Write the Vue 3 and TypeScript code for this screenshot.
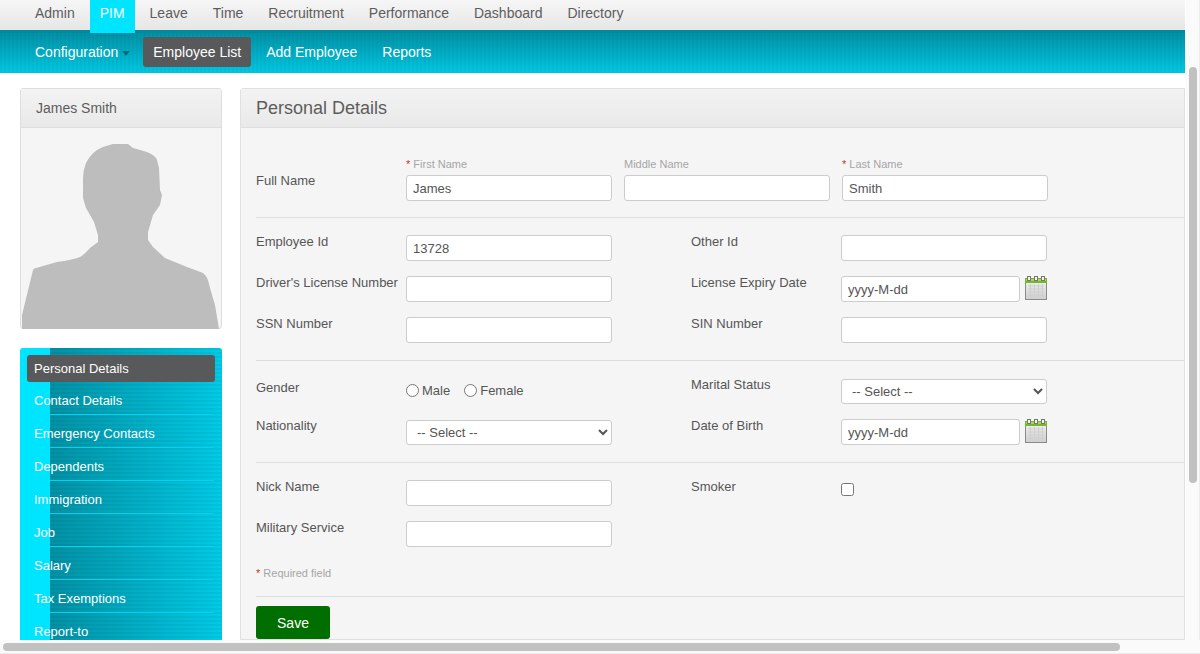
<script setup lang="ts">
const topMenu = ['Admin', 'PIM', 'Leave', 'Time', 'Recruitment', 'Performance', 'Dashboard', 'Directory']
const subMenu = ['Configuration', 'Employee List', 'Add Employee', 'Reports']
const sideMenu = [
  'Personal Details',
  'Contact Details',
  'Emergency Contacts',
  'Dependents',
  'Immigration',
  'Job',
  'Salary',
  'Tax Exemptions',
  'Report-to',
]
</script>

<template>
  <div class="page">
    <nav class="top-nav">
      <a v-for="item in topMenu" :key="item" class="top-item" :class="{ active: item === 'PIM' }">{{ item }}</a>
    </nav>
    <nav class="sub-nav">
      <a
        v-for="item in subMenu"
        :key="item"
        class="sub-item"
        :class="{ active: item === 'Employee List', config: item === 'Configuration' }"
        >{{ item }}<i v-if="item === 'Configuration'" class="caret"></i
      ></a>
    </nav>

    <div class="content">
      <aside class="sidebar">
        <section class="photo-card">
          <h2 class="photo-title">James Smith</h2>
          <div class="photo-body">
            <svg class="silhouette" viewBox="22 144 198 185" aria-hidden="true">
              <path
                fill="#bdbdbd"
                d="M22 329 L22 315 L33 270 Q34 268 36 268 L57 262 Q72 260 80 257 Q85 254 90 248 L98 242 L98 235 L94 222 L86 208 L83 198 L83 178 Q83 170 86 163 Q90 155 97 150 Q104 146 113 144 L128 144 L133 148 L147 152 Q155 155 157 160 L159 168 L160 190 L162 195 L160 205 L153 215 L148 232 L148 240 L153 247 L165 258 L187 267 L203 273 Q207 276 208 280 L210 288 L215 305 L219 329 Z"
              />
            </svg>
          </div>
        </section>

        <ul class="side-menu">
          <li v-for="(item, i) in sideMenu" :key="item" class="side-item" :class="{ active: i === 0 }">
            {{ item }}
          </li>
        </ul>
      </aside>

      <main class="details">
        <h1 class="details-title">Personal Details</h1>
        <form class="details-form" @submit.prevent>
          <div class="name-row">
            <label class="row-label name-label">Full Name</label>
            <div class="name-field">
              <span class="hint"><b>*</b> First Name</span>
              <input class="input name-input" value="James" />
            </div>
            <div class="name-field">
              <span class="hint">Middle Name</span>
              <input class="input name-input" />
            </div>
            <div class="name-field">
              <span class="hint"><b>*</b> Last Name</span>
              <input class="input name-input" value="Smith" />
            </div>
          </div>

          <hr class="divider first" />

          <div class="grid ids">
            <label class="row-label">Employee Id</label>
            <input class="input" value="13728" />
            <label class="row-label">Other Id</label>
            <input class="input" />

            <label class="row-label">Driver's License Number</label>
            <input class="input" />
            <label class="row-label">License Expiry Date</label>
            <div class="date-field">
              <input class="input date-input" value="yyyy-M-dd" />
              <svg class="cal" viewBox="0 0 22 24" aria-hidden="true">
                <defs>
                  <linearGradient id="cal-body" x1="0" y1="0" x2="0" y2="1">
                    <stop offset="0" stop-color="#f2f2f2" />
                    <stop offset="1" stop-color="#cfcfcf" />
                  </linearGradient>
                </defs>
                <rect x="0.5" y="2.5" width="21" height="21" fill="url(#cal-body)" stroke="#8b8b86" />
                <rect x="0" y="2" width="22" height="5" fill="#77b82a" />
                <rect x="1" y="3" width="20" height="2" fill="#a5d65a" />
                <path d="M3 10h16M3 13h16M3 16h16M3 19h16M5.5 8v14M9.5 8v14M13.5 8v14M17.5 8v14" stroke="#cfcfcf" />
                <rect x="2.5" y="0.5" width="3" height="4" fill="#f2f2f2" stroke="#77776f" />
                <rect x="9.5" y="0.5" width="3" height="4" fill="#f2f2f2" stroke="#77776f" />
                <rect x="16.5" y="0.5" width="3" height="4" fill="#f2f2f2" stroke="#77776f" />
              </svg>
            </div>

            <label class="row-label">SSN Number</label>
            <input class="input" />
            <label class="row-label">SIN Number</label>
            <input class="input" />
          </div>

          <hr class="divider second" />

          <div class="grid personal">
            <label class="row-label gender-label">Gender</label>
            <div class="radios">
              <label class="radio"><input type="radio" name="gender" />Male</label>
              <label class="radio"><input type="radio" name="gender" />Female</label>
            </div>
            <label class="row-label status-label">Marital Status</label>
            <select class="input select"><option>-- Select --</option></select>

            <label class="row-label lift">Nationality</label>
            <select class="input select"><option>-- Select --</option></select>
            <label class="row-label lift">Date of Birth</label>
            <div class="date-field lift-date">
              <input class="input date-input" value="yyyy-M-dd" />
              <svg class="cal" viewBox="0 0 22 24" aria-hidden="true">
                <rect x="0.5" y="2.5" width="21" height="21" fill="url(#cal-body)" stroke="#8b8b86" />
                <rect x="0" y="2" width="22" height="5" fill="#77b82a" />
                <rect x="1" y="3" width="20" height="2" fill="#a5d65a" />
                <path d="M3 10h16M3 13h16M3 16h16M3 19h16M5.5 8v14M9.5 8v14M13.5 8v14M17.5 8v14" stroke="#cfcfcf" />
                <rect x="2.5" y="0.5" width="3" height="4" fill="#f2f2f2" stroke="#77776f" />
                <rect x="9.5" y="0.5" width="3" height="4" fill="#f2f2f2" stroke="#77776f" />
                <rect x="16.5" y="0.5" width="3" height="4" fill="#f2f2f2" stroke="#77776f" />
              </svg>
            </div>
          </div>

          <hr class="divider third" />

          <div class="grid extra">
            <label class="row-label">Nick Name</label>
            <input class="input" />
            <label class="row-label">Smoker</label>
            <div><input class="check" type="checkbox" /></div>

            <label class="row-label">Military Service</label>
            <input class="input" />
          </div>

          <p class="required"><b>*</b> Required field</p>
          <hr class="divider fourth" />
          <button class="save" type="button">Save</button>
        </form>
      </main>
    </div>

    <!-- scrollbars drawn over the page, window is fixed size -->
    <div class="scroll-v"><div class="thumb-v"></div></div>
    <div class="scroll-h"><div class="thumb-h"></div></div>
  </div>
</template>

<style scoped>
.page {
  position: relative;
  width: 1200px;
  height: 654px;
  overflow: hidden;
  background: #fff;
  color: #555;
  font-family: 'Liberation Sans', Arial, sans-serif;
  font-size: 13px;
}

.top-nav {
  display: flex;
  width: 1185px;
  height: 30px;
  padding-left: 25px;
  box-sizing: border-box;
  background: linear-gradient(#f6f6f6, #e6e6e6);
}
.top-item {
  height: 33px;
  padding: 5px 10px 0;
  margin-right: 5px;
  box-sizing: border-box;
  font-size: 14px;
  line-height: 17px;
  color: #5d5d5d;
}
.top-item.active {
  position: relative;
  z-index: 1;
  background: #00e5ff;
  color: #fff;
}

.sub-nav {
  display: flex;
  align-items: flex-start;
  width: 1185px;
  height: 43px;
  box-sizing: border-box;
  padding: 4px 0 0 25px;
  border-top: 3px solid #008b9c;
  background:
    repeating-linear-gradient(90deg, rgba(0, 0, 0, 0.03) 0 2px, transparent 2px 4px),
    linear-gradient(#0291a5, #00c8e3);
}
.sub-item {
  height: 30px;
  padding: 0 10px;
  margin-right: 5px;
  border-radius: 3px;
  font-size: 14px;
  line-height: 30px;
  color: #fff;
}
.sub-item.config {
  margin-right: 3px;
}
.sub-item.active {
  background: #58595b;
}
.caret {
  display: inline-block;
  width: 0;
  height: 0;
  margin-left: 4px;
  vertical-align: 1px;
  border: 4px solid transparent;
  border-top: 5px solid #076a78;
  border-bottom: 0;
}

.content {
  display: flex;
  gap: 18px;
  padding: 15px 0 0 20px;
}

.sidebar {
  width: 202px;
  flex: none;
}
.photo-card {
  box-sizing: border-box;
  height: 241px;
  border: 1px solid #dedede;
  border-radius: 3px;
  background: #f5f5f5;
}
.photo-title {
  height: 38px;
  margin: 0;
  padding-left: 15px;
  border-bottom: 1px solid #dedede;
  background: linear-gradient(#f3f3f3, #e9e9e9);
  font-size: 14px;
  font-weight: 400;
  line-height: 39px;
  color: #5d5d5d;
}
.photo-body {
  display: flex;
  justify-content: center;
  padding-top: 16px;
}
.silhouette {
  display: block;
  width: 198px;
  height: 185px;
}

.side-menu {
  height: 320px;
  margin: 19px 0 0;
  padding: 7px 7px 0;
  list-style: none;
  border-radius: 3px 3px 0 0;
  background:
    linear-gradient(90deg, #00e5ff 30px, transparent 30px),
    repeating-linear-gradient(rgba(0, 0, 0, 0.05) 0 2px, transparent 2px 4px),
    linear-gradient(90deg, #0291a5 30px, #00cbe6 100%);
}
.side-item {
  position: relative;
  height: 33px;
  box-sizing: border-box;
  padding: 6px 0 0 7px;
  font-size: 13px;
  line-height: 26px;
  color: #fff;
}
.side-item::after {
  content: '';
  position: absolute;
  left: 23px;
  right: 1px;
  bottom: 0;
  height: 1px;
  background: #00d4ee;
}
.side-item.active {
  height: 27px;
  padding-top: 0;
  border-radius: 3px;
  background: #58595b;
  line-height: 27px;
}
.side-item.active::after {
  display: none;
}

.details {
  width: 945px;
  flex: none;
  height: 552px;
  box-sizing: border-box;
  border: 1px solid #e0e0e0;
  border-radius: 3px 0 0 0;
  background: #f5f5f5;
}
.details-title {
  height: 38px;
  margin: 0;
  padding-left: 15px;
  border-bottom: 1px solid #dedede;
  background: linear-gradient(#f3f3f3, #e9e9e9);
  font-size: 18px;
  font-weight: 400;
  line-height: 39px;
  color: #5d5d5d;
}
.details-form {
  padding: 0 0 0 15px;
}

.row-label {
  font-size: 13px;
  line-height: 16px;
  color: #555;
}
.input {
  display: block;
  box-sizing: border-box;
  width: 206px;
  height: 26px;
  padding: 0 6px;
  border: 1px solid #ccc;
  border-radius: 3px;
  background: #fff;
  color: #555;
  font-family: inherit;
  font-size: 13px;
  outline: none;
}

.name-row {
  display: flex;
  align-items: flex-start;
  gap: 12px;
  padding-top: 30px;
}
.name-label {
  width: 138px;
  margin-top: 15px;
}
.name-field {
  width: 206px;
}
.hint {
  display: block;
  height: 17px;
  font-size: 11px;
  line-height: 13px;
  color: #a5a5a5;
}
b {
  font-weight: 400;
  color: #c0392b;
}

.divider {
  height: 1px;
  margin: 0;
  border: 0;
  background: #dedede;
}
.divider.first {
  margin-top: 16px;
}
.divider.second {
  margin-top: 17px;
}
.divider.third {
  margin-top: 17px;
}
.divider.fourth {
  margin-top: 16px;
}

.grid {
  display: grid;
  grid-template-columns: 150px 206px 79px 150px 1fr;
  justify-items: start;
}
.grid > :nth-child(4n + 1) {
  grid-column: 1;
}
.grid > :nth-child(4n + 2) {
  grid-column: 2;
}
.grid > :nth-child(4n + 3) {
  grid-column: 4;
}
.grid > :nth-child(4n + 4) {
  grid-column: 5;
}
.ids {
  padding-top: 17px;
  row-gap: 15px;
}
.ids .row-label {
  margin-top: -1px;
}
.personal {
  padding-top: 18px;
  row-gap: 15px;
}
.extra {
  padding-top: 17px;
  row-gap: 15px;
}
.extra .row-label {
  margin-top: -1px;
}
.lift {
  margin-top: -2px;
}
.status-label {
  margin-top: -2px;
}
.gender-label {
  margin-top: 1px;
}
.radios {
  display: flex;
  gap: 14px;
  align-items: center;
  height: 23px;
  margin-bottom: 3px;
}
.radio {
  display: flex;
  align-items: center;
  gap: 3px;
  font-size: 13px;
}
.radio input {
  width: 13px;
  height: 13px;
  margin: 0;
}
.select {
  height: 25px;
  padding: 0 0 0 6px;
}
.date-field {
  display: flex;
  align-items: flex-start;
  gap: 5px;
}
.lift-date {
  margin-top: -1px;
}
.date-input {
  width: 179px;
}
.cal {
  display: block;
  width: 22px;
  height: 24px;
  flex: none;
}
.check {
  display: block;
  width: 13px;
  height: 13px;
  margin: 3px 0 0;
}

.required {
  margin: 20px 0 0;
  font-size: 11px;
  line-height: 13px;
  color: #a5a5a5;
}
.save {
  display: block;
  width: 74px;
  height: 33px;
  margin-top: 9px;
  border: 0;
  border-radius: 3px;
  background: #006e00;
  color: #fff;
  font-family: inherit;
  font-size: 14px;
}

.scroll-v {
  position: absolute;
  top: 0;
  right: 0;
  width: 14px;
  height: 654px;
  background: #fafafa;
  border-right: 1px solid #ececec;
  box-sizing: border-box;
}
.thumb-v {
  position: absolute;
  top: 67px;
  left: 3px;
  width: 8px;
  height: 416px;
  border-radius: 4px;
  background: #c1c1c1;
}
.scroll-h {
  position: absolute;
  left: 0;
  bottom: 0;
  width: 1200px;
  height: 14px;
  background: #fafafa;
  border-bottom: 1px solid #ececec;
  box-sizing: border-box;
}
.thumb-h {
  position: absolute;
  top: 3px;
  left: 3px;
  width: 1117px;
  height: 8px;
  border-radius: 4px;
  background: #c1c1c1;
}
</style>

<style>
html,
body {
  margin: 0;
  overflow: hidden;
}
</style>
